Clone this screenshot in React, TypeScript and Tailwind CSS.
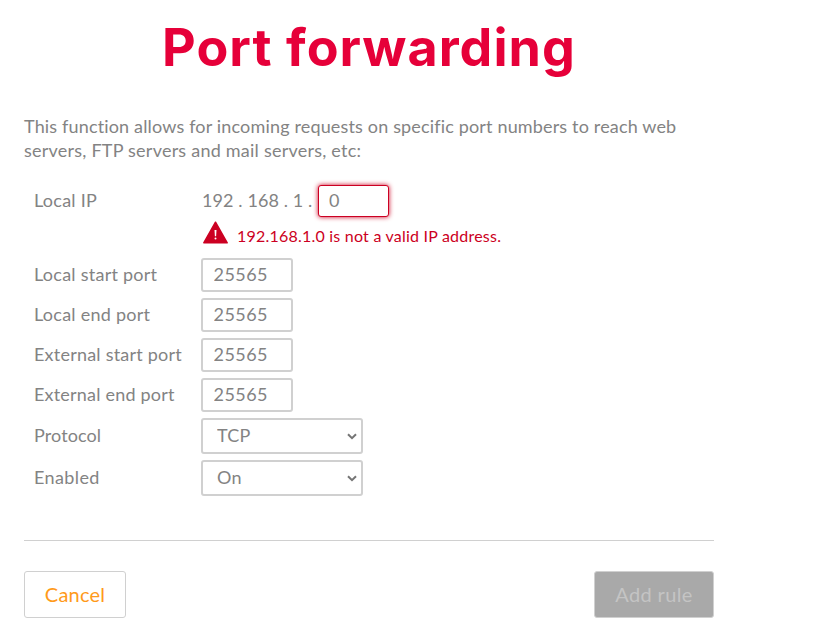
import React, { useState } from 'react';

interface PortFieldProps {
  id: string;
  label: string;
  labelClass: string;
  value: string;
  onChange: (value: string) => void;
}

const PortField: React.FC<PortFieldProps> = ({ id, label, labelClass, value, onChange }) => (
  <div className="flex h-[34px] items-center">
    <label htmlFor={id} className={`w-[167px] shrink-0 pb-0.5 whitespace-nowrap ${labelClass}`}>{label}</label>
    <input
      id={id}
      value={value}
      onChange={e => onChange(e.target.value)}
      className="h-[34px] w-[92px] rounded-[3px] border-2 border-[#d0d0d0] bg-white px-[10.5px] pb-0.5 tracking-[0.45px] outline-none"
    />
  </div>
);

interface SelectFieldProps {
  id: string;
  label: string;
  labelClass: string;
  options: string[];
}

const SelectField: React.FC<SelectFieldProps> = ({ id, label, labelClass, options }) => (
  <div className="flex h-9 items-center">
    <label htmlFor={id} className={`w-[167px] shrink-0 pb-0.5 whitespace-nowrap ${labelClass}`}>{label}</label>
    <div className="relative">
      <select
        id={id}
        className="block h-9 w-[162px] appearance-none rounded-[3px] border-2 border-[#d0d0d0] bg-white pb-0.5 pl-[14px] tracking-[0.2px] outline-none"
      >
        {options.map(option => <option key={option}>{option}</option>)}
      </select>
      <svg width="10" height="7" viewBox="0 0 10 7" className="pointer-events-none absolute top-[15px] right-[6px]" aria-hidden="true">
        <path d="M1 1.2 5 5.2l4-4" fill="none" stroke="#757575" strokeWidth="2" />
      </svg>
    </div>
  </div>
);

const WarningIcon = () => (
  <svg width="26" height="24" viewBox="0 0 26 24" className="shrink-0" aria-hidden="true">
    <path d="M13.5 1.2 25.2 21.8H1.8Z" fill="#cc0022" stroke="#cc0022" strokeWidth="1.5" strokeLinejoin="round" />
    <path d="M12.5 9h2l-.4 6.3h-1.2Z" fill="#fff" />
    <circle cx="13.5" cy="17.4" r="1" fill="#fff" />
  </svg>
);

export default function App() {
  const [host, setHost] = useState('0');
  const [ports, setPorts] = useState({
    localStart: '25565',
    localEnd: '25565',
    externalStart: '25565',
    externalEnd: '25565',
  });

  const setPort = (name: keyof typeof ports) => (value: string) => setPorts({ ...ports, [name]: value });

  return (
    <div className="min-h-[642px] bg-white pl-6 font-['Lato',sans-serif] text-[18px] leading-6 text-[#838383]">
      <main className="w-[690px]">
        <h1 className="pt-4 text-center font-['Inter',sans-serif] text-[52px] leading-[64px] font-bold tracking-[1.05px] whitespace-nowrap text-[#e60039]">
          Port forwarding
        </h1>

        <p className="mt-[34px] whitespace-nowrap">
          <span className="tracking-[0.16px]">This function allows for incoming requests on specific port numbers to reach web</span>
          <br />
          <span className="tracking-[0.23px]">servers, FTP servers and mail servers, etc:</span>
        </p>

        <form className="mt-[22px] pl-[10px]" onSubmit={e => e.preventDefault()}>
          <div className="flex h-[34px] items-center">
            <label htmlFor="host" className="w-[168px] shrink-0 pb-0.5 tracking-[0.25px]">Local IP</label>
            <span className="w-[116px] pb-0.5 tracking-[0.1px] whitespace-nowrap">192 . 168 . 1 .</span>
            <input
              id="host"
              value={host}
              onChange={e => setHost(e.target.value)}
              aria-invalid="true"
              className="h-8 w-[71px] rounded-[3px] border border-[#cc0022] bg-white px-[10px] pb-0.5 shadow-[0_0_5px_#cc0022] outline-none"
            />
          </div>

          <div className="mt-[3px] flex h-6 items-start pl-[168px] text-[#cc0022]" role="alert">
            <WarningIcon />
            <span className="pt-[3px] pl-[9px] text-base leading-6 tracking-[0.22px] whitespace-nowrap">
              192.168.1.0 is not a valid IP address.
            </span>
          </div>

          <div className="mt-[13px] flex flex-col gap-1.5">
            <PortField id="local-start" label="Local start port" labelClass="tracking-[0.25px]" value={ports.localStart} onChange={setPort('localStart')} />
            <PortField id="local-end" label="Local end port" labelClass="tracking-[0.25px]" value={ports.localEnd} onChange={setPort('localEnd')} />
            <PortField id="external-start" label="External start port" labelClass="tracking-[0.22px]" value={ports.externalStart} onChange={setPort('externalStart')} />
            <PortField id="external-end" label="External end port" labelClass="tracking-[0.2px]" value={ports.externalEnd} onChange={setPort('externalEnd')} />
            <SelectField id="protocol" label="Protocol" labelClass="tracking-[0.1px]" options={['TCP', 'UDP']} />
            <SelectField id="enabled" label="Enabled" labelClass="tracking-[0.4px]" options={['On', 'Off']} />
          </div>
        </form>

        <div className="mt-11 flex justify-between border-t border-[#d0d0d0] pt-[30px] text-[20px]">
          <button className="h-[47px] w-[102px] rounded-[3px] border border-[#d0d0d0] bg-white pb-0.5 tracking-[0.2px] text-[#ff9a1a]">
            Cancel
          </button>
          <button disabled className="h-[47px] w-[120px] rounded-[3px] border border-[#d0d0d0] bg-[#a9a9a9] pb-0.5 tracking-[0.35px] text-[#c4c4c4]">
            Add rule
          </button>
        </div>
      </main>
    </div>
  );
}
